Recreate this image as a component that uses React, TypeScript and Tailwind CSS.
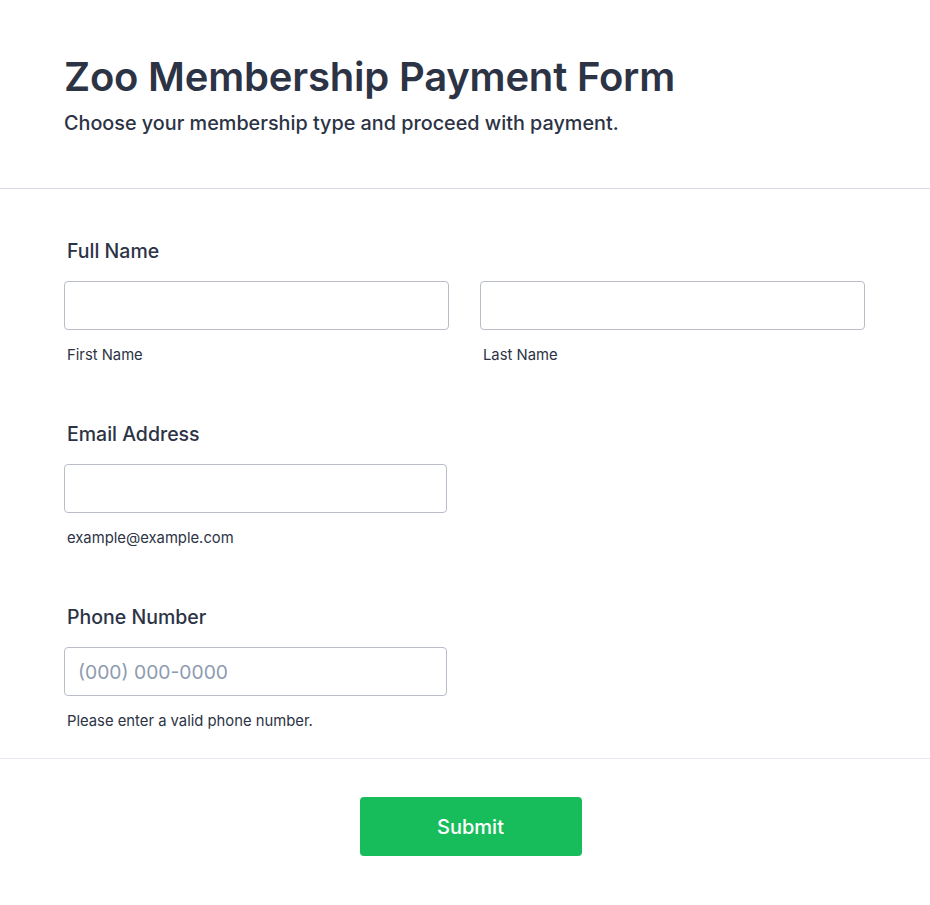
import React from 'react'

const font = { fontFamily: 'Inter, "Noto Sans", sans-serif' }

function Field({ label, children, hint }: { label: string; children: React.ReactNode; hint?: string }) {
  return (
    <div className="flex flex-col">
      <label className="pl-[3px] text-[19.5px] leading-[24px] font-medium text-[#2c3345]">{label}</label>
      <div className="mt-[18px]">{children}</div>
      {hint && <p className="mt-[16px] pl-[3px] text-[14.8px] leading-[18px] text-[#2c3345]">{hint}</p>}
    </div>
  )
}

function Input({ placeholder }: { placeholder?: string }) {
  return (
    <input
      placeholder={placeholder}
      className="h-[49px] w-full rounded-[4px] border border-[#b8bdc9] bg-white px-[13px] text-[19.3px] text-[#2c3345] placeholder:text-[#8d9bb1] outline-none"
    />
  )
}

export default function App() {
  return (
    <div className="min-h-screen bg-white text-[#2c3345]" style={font}>
      <header className="px-16 pt-[53px] pb-[52px] border-b border-[#d9d9e8]">
        <h1 className="text-[40px] leading-[48px] font-semibold tracking-[-0.005em] text-[#2c3345]">
          Zoo Membership Payment Form
        </h1>
        <p className="mt-[9px] text-[19.8px] leading-[26px] font-medium">
          Choose your membership type and proceed with payment.
        </p>
      </header>

      <main className="pl-16 pr-[65px] pt-[50px] pb-[28px] border-b border-[#e6e7ef] flex flex-col gap-[58px]">
        <div className="flex flex-col">
          <label className="pl-[3px] text-[19.5px] leading-[24px] font-medium">Full Name</label>
          <div className="mt-[18px] grid grid-cols-2 gap-[31px]">
            <div className="flex flex-col">
              <Input />
              <p className="mt-[16px] pl-[3px] text-[14.8px] leading-[18px]">First Name</p>
            </div>
            <div className="flex flex-col">
              <Input />
              <p className="mt-[16px] pl-[3px] text-[14.8px] leading-[18px]">Last Name</p>
            </div>
          </div>
        </div>

        <div className="w-[383px]">
          <Field label="Email Address" hint="example@example.com">
            <Input />
          </Field>
        </div>

        <div className="w-[383px]">
          <Field label="Phone Number" hint="Please enter a valid phone number.">
            <Input placeholder="(000) 000-0000" />
          </Field>
        </div>
      </main>

      <div className="flex justify-center pl-[11px] pt-[38px] pb-[50px]">
        <button className="h-[59px] w-[222px] rounded-[4px] bg-[#18bd5b] text-[20px] font-medium text-white">
          Submit
        </button>
      </div>
    </div>
  )
}
